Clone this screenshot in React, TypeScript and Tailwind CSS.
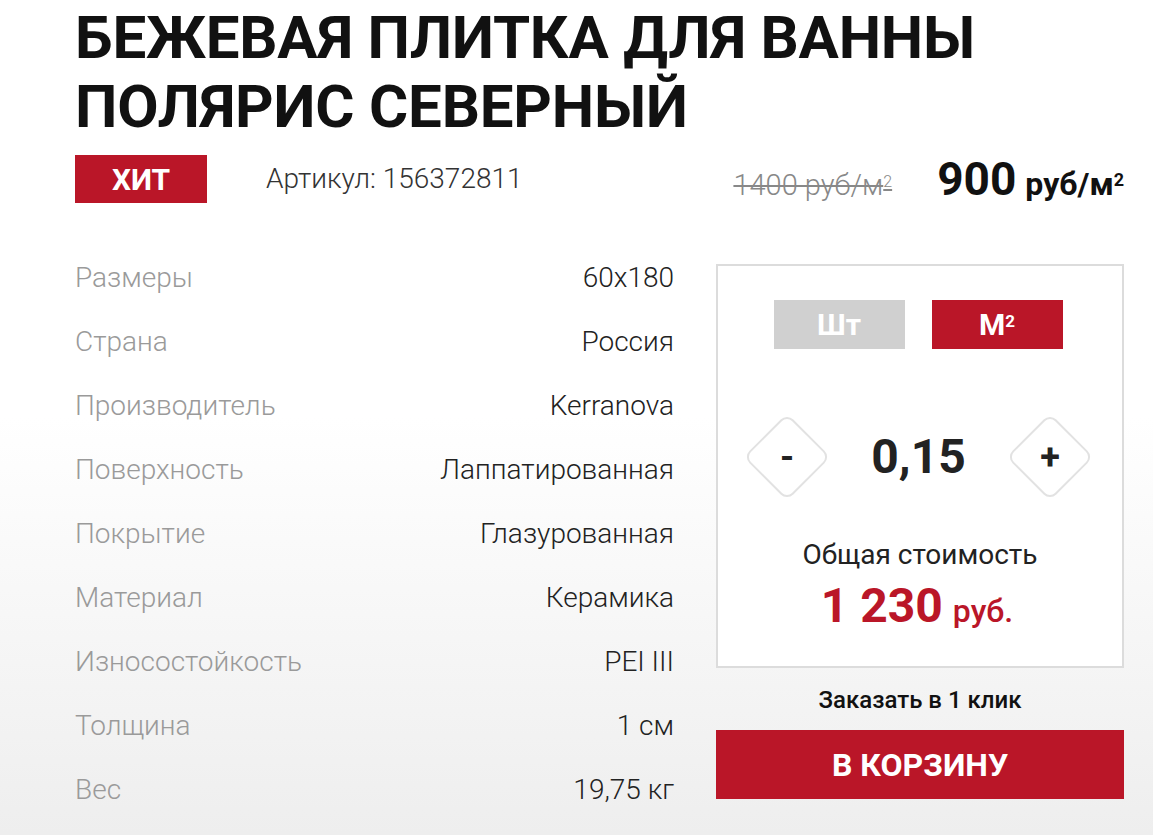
import React from 'react';

const specs = [
  { label: 'Размеры', value: '60x180' },
  { label: 'Страна', value: 'Россия' },
  { label: 'Производитель', value: 'Kerranova' },
  { label: 'Поверхность', value: 'Лаппатированная' },
  { label: 'Покрытие', value: 'Глазурованная' },
  { label: 'Материал', value: 'Керамика' },
  { label: 'Износостойкость', value: 'PEI III' },
  { label: 'Толщина', value: '1 см' },
  { label: 'Вес', value: '19,75 кг' },
];

function Diamond({ children }: { children: React.ReactNode }) {
  return (
    <button className="relative w-[83px] h-[83px] flex items-center justify-center">
      <span className="absolute w-[62px] h-[62px] rotate-45 border-2 border-[#e2e2e2] rounded-[9px] bg-white" />
      <span className="relative text-[36px] leading-none font-bold text-[#222]">{children}</span>
    </button>
  );
}

export default function App() {
  return (
    <div
      className="w-[1153px] h-[835px] overflow-hidden bg-gradient-to-b from-white via-white to-[#eeeeee] pl-[75px] pr-[29px] pt-[3px]"
      style={{ fontFamily: 'Roboto, "Noto Sans", sans-serif' }}
    >
      <h1 className="text-[60px] leading-[69px] font-bold text-[#111] uppercase tracking-[-0.2px]">
        Бежевая плитка для ванны
        <br />
        Полярис северный
      </h1>

      <div className="mt-[14px] h-[48px] flex items-center">
        <div className="w-[132px] h-[48px] bg-[#ba1628] text-white text-[30px] font-bold flex items-center justify-center">
          ХИТ
        </div>
        <div className="ml-[59px] text-[28px] text-[#333] font-light">Артикул: 156372811</div>
        <div className="ml-auto flex items-baseline">
          <span className="text-[29px] text-[#888] line-through font-light">
            1400 руб/м<sup className="text-[16px]">2</sup>
          </span>
          <span className="ml-[45px] text-[46px] font-bold text-[#111]">900</span>
          <span className="ml-[9px] text-[32px] font-bold text-[#111]">
            руб/м<sup className="text-[18px]">2</sup>
          </span>
        </div>
      </div>

      <div className="mt-[43px] flex items-start">
        <div className="w-[599px] flex flex-col">
          {specs.map((s) => (
            <div key={s.label} className="h-[64px] flex items-center justify-between text-[28px] font-light">
              <span className="text-[#9a9a9a]">{s.label}</span>
              <span className="text-[#222]">{s.value}</span>
            </div>
          ))}
        </div>

        <div className="ml-[42px] w-[408px] mt-[18px] flex flex-col">
          <div className="h-[404px] border-2 border-[#dcdcdc] bg-white flex flex-col items-center pt-[34px]">
            <div className="flex gap-[27px] -ml-[4px]">
              <button className="w-[131px] h-[49px] bg-[#d0d0d0] text-white text-[30px] font-bold">Шт</button>
              <button className="w-[131px] h-[49px] bg-[#ba1628] text-white text-[30px] font-bold">
                М<sup className="text-[17px]">2</sup>
              </button>
            </div>
            <div className="mt-[66px] flex items-center gap-[40px] -ml-[3px]">
              <Diamond>-</Diamond>
              <span className="text-[48px] font-bold text-[#222] w-[100px] text-center">0,15</span>
              <Diamond>+</Diamond>
            </div>
            <div className="mt-[36px] text-[28px] text-[#222]">Общая стоимость</div>
            <div className="mt-[4px] flex items-baseline text-[#ba1628] -ml-[6px]">
              <span className="text-[48px] font-bold leading-[52px]">1 230</span>
              <span className="ml-[10px] text-[32px] font-medium">руб.</span>
            </div>
          </div>
          <div className="mt-[14px] text-center text-[24px] font-medium text-[#111]">Заказать в 1 клик</div>
          <button className="mt-[12px] h-[69px] bg-[#ba1628] text-white text-[32px] font-bold">В КОРЗИНУ</button>
        </div>
      </div>
    </div>
  );
}
